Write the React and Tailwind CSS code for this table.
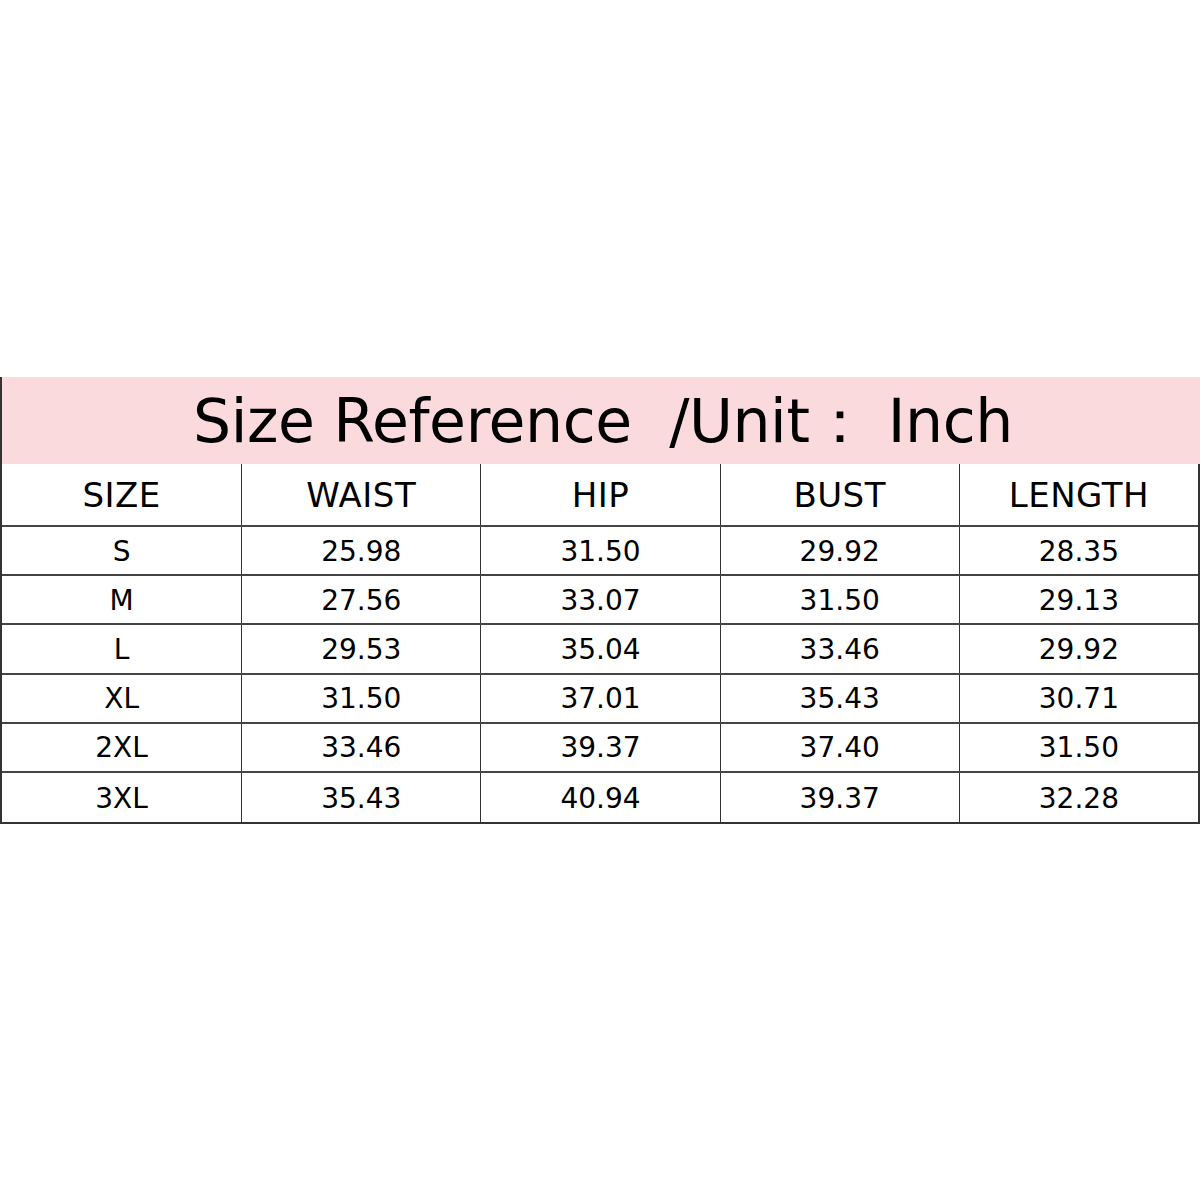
import React from 'react';

const cols = ['SIZE', 'WAIST', 'HIP', 'BUST', 'LENGTH'];
const rows = [
  ['S', '25.98', '31.50', '29.92', '28.35'],
  ['M', '27.56', '33.07', '31.50', '29.13'],
  ['L', '29.53', '35.04', '33.46', '29.92'],
  ['XL', '31.50', '37.01', '35.43', '30.71'],
  ['2XL', '33.46', '39.37', '37.40', '31.50'],
  ['3XL', '35.43', '40.94', '39.37', '32.28'],
];

export default function App() {
  return (
    <div className="w-[1200px] h-[1200px] bg-white text-black font-['DejaVu_Sans',sans-serif]">
      <div className="pt-[377px]">
        {/* title band */}
        <div className="h-[87px] bg-[#fadadd] border-l-2 border-[#333] flex items-center justify-center">
          <span className="text-[60px] leading-none tracking-[-0.4px] pl-[4px]">Size Reference&nbsp;&nbsp;/Unit：&nbsp;Inch</span>
        </div>
        <div className="border-l-2 border-r-2 border-b-2 border-[#333]">
          <div className="grid grid-cols-5 h-[63px] border-b-2 border-[#444]">
            {cols.map((c, i) => (
              <div key={c} className={`flex items-center justify-center pt-[2px] text-[34px] tracking-[0.5px] ${i > 0 ? 'border-l border-[#333]' : ''}`}>
                {c}
              </div>
            ))}
          </div>
          {rows.map((r, ri) => (
            <div key={ri} className={`grid grid-cols-5 h-[49.2px] ${ri < rows.length - 1 ? 'border-b-2 border-[#444]' : ''}`}>
              {r.map((v, i) => (
                <div key={i} className={`flex items-center justify-center pt-[2px] text-[28px] ${i > 0 ? 'border-l border-[#333]' : ''}`}>
                  {v}
                </div>
              ))}
            </div>
          ))}
        </div>
      </div>
    </div>
  );
}
